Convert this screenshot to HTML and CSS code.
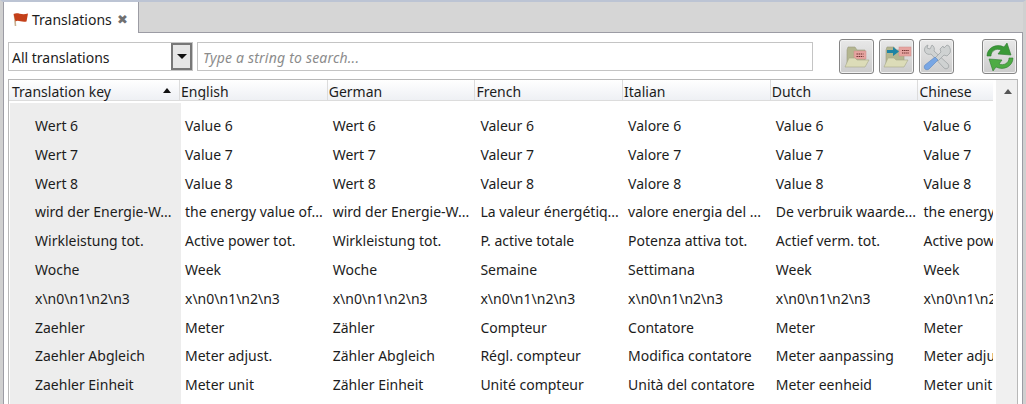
FILE: index.html
```html
<!DOCTYPE html>
<html lang="en">
<head>
<meta charset="utf-8">
<title>Translations</title>
<link rel="stylesheet" href="styles.css">
</head>
<body>
<div class="window">
  <div class="tabstrip">
    <div class="tab">
      <svg class="flag" width="17" height="17" viewBox="0 0 17 17"><path d="M2.5 4 L3.5 15" stroke="#c8b090" stroke-width="1.6" fill="none"/><path d="M1.5 3 C6 1 9 4.5 16 2.5 L14.5 10.5 C9 11.5 6 8.5 3.5 10.5 Z" fill="#c4401a"/></svg>
      <span class="tab-label">Translations</span>
      <span class="tab-close">✖</span>
    </div>
  </div>
  <div class="panel">
    <div class="toolbar">
      <div class="combo">
        <span class="combo-text">All translations</span>
        <span class="combo-btn"><i class="arrow-down"></i></span>
      </div>
      <div class="search">Type a string to search...</div>
      <div class="tools">
        <button class="tool"><svg width="28" height="28" viewBox="0 0 28 28"><path d="M4 7l1-3h7l2 3h8v14H4z" fill="#b4b690" stroke="#9a9c80" stroke-width=".6"/><rect x="11" y="8" width="12" height="8" fill="#e6a4a0" stroke="#d08c88" stroke-width=".5"/><path d="M13.5 11h7M13.5 13.5h7" stroke="#6a2c2c" stroke-width="1" stroke-dasharray="1.4 .7"/><path d="M2 24l4-9h6l2 2h12l-4 7z" fill="#dcdcb8" stroke="#a8aa8c" stroke-width=".6"/></svg></button>
        <button class="tool"><svg width="30" height="28" viewBox="0 0 30 28"><path d="M4 7l1-3h7l2 3h8v14H4z" fill="#b4b690" stroke="#9a9c80" stroke-width=".6"/><rect x="17" y="4" width="12" height="9" fill="#e6a4a0" stroke="#d08c88" stroke-width=".5"/><path d="M20 7.5h7M20 10h7" stroke="#6a2c2c" stroke-width="1" stroke-dasharray="1.4 .7"/><path d="M5 7h6V4l6 4.5L11 13v-3H5z" fill="#1f84a4"/><path d="M2 24l4-9h6l2 2h12l-4 7z" fill="#dcdcb8" stroke="#a8aa8c" stroke-width=".6"/></svg></button>
        <button class="tool"><svg width="30" height="30" viewBox="0 0 30 30"><path d="M6 3a5 5 0 0 0-3 7c1 2 4 3 6 2l13 14c1 1 3 1 4 0s1-3 0-4L12 9c1-2 0-5-2-6L8 7 5 6z" fill="#cfd2d2" stroke="#a0a4a6" stroke-width=".8"/><path d="M27 4l-2-1-3 3-1-2-3 3 1 3-6 6 3 3 6-6 3 1 3-3c1-3 0-5-1-7z" fill="#cfd2d2" stroke="#a0a4a6" stroke-width=".8"/><path d="M13 15l3 3-9 9c-1 1-3 1-4 0s-1-3 0-4z" fill="#78a6e4" stroke="#5a86c0" stroke-width=".6"/></svg></button>
        <button class="tool tool-refresh"><svg width="32" height="32" viewBox="0 0 32 32"><path d="M3 15C3 7 12 2 20 6l3-4 4 12-13-1 3-4c-5-2-10 1-10 6z" fill="#3b9a38" stroke="#2c7a2e" stroke-width=".6"/><path d="M29 17c0 8-9 13-17 9l-3 4-4-12 13 1-3 4c5 2 10-1 10-6z" fill="#4eac44" stroke="#2c7a2e" stroke-width=".6"/></svg></button>
      </div>
    </div>
    <div class="table">
      <div class="grid">
        <div class="row head">
          <div class="cell key">Translation key<i class="arrow-up"></i></div>
          <div class="cell">English</div><div class="cell">German</div><div class="cell">French</div><div class="cell">Italian</div><div class="cell">Dutch</div><div class="cell">Chinese</div>
        </div>
        <div class="row first"><div class="cell key">Wert 6</div><div class="cell">Value 6</div><div class="cell">Wert 6</div><div class="cell">Valeur 6</div><div class="cell">Valore 6</div><div class="cell">Value 6</div><div class="cell">Value 6</div></div>
        <div class="row"><div class="cell key">Wert 7</div><div class="cell">Value 7</div><div class="cell">Wert 7</div><div class="cell">Valeur 7</div><div class="cell">Valore 7</div><div class="cell">Value 7</div><div class="cell">Value 7</div></div>
        <div class="row"><div class="cell key">Wert 8</div><div class="cell">Value 8</div><div class="cell">Wert 8</div><div class="cell">Valeur 8</div><div class="cell">Valore 8</div><div class="cell">Value 8</div><div class="cell">Value 8</div></div>
        <div class="row"><div class="cell key">wird der Energie-W...</div><div class="cell">the energy value of...</div><div class="cell">wird der Energie-W...</div><div class="cell">La valeur énergétiq...</div><div class="cell">valore energia del ...</div><div class="cell">De verbruik waarde...</div><div class="cell">the energy value of...</div></div>
        <div class="row"><div class="cell key">Wirkleistung tot.</div><div class="cell">Active power tot.</div><div class="cell">Wirkleistung tot.</div><div class="cell">P. active totale</div><div class="cell">Potenza attiva tot.</div><div class="cell">Actief verm. tot.</div><div class="cell">Active power tot.</div></div>
        <div class="row"><div class="cell key">Woche</div><div class="cell">Week</div><div class="cell">Woche</div><div class="cell">Semaine</div><div class="cell">Settimana</div><div class="cell">Week</div><div class="cell">Week</div></div>
        <div class="row"><div class="cell key">x\n0\n1\n2\n3</div><div class="cell">x\n0\n1\n2\n3</div><div class="cell">x\n0\n1\n2\n3</div><div class="cell">x\n0\n1\n2\n3</div><div class="cell">x\n0\n1\n2\n3</div><div class="cell">x\n0\n1\n2\n3</div><div class="cell">x\n0\n1\n2\n3</div></div>
        <div class="row"><div class="cell key">Zaehler</div><div class="cell">Meter</div><div class="cell">Zähler</div><div class="cell">Compteur</div><div class="cell">Contatore</div><div class="cell">Meter</div><div class="cell">Meter</div></div>
        <div class="row"><div class="cell key">Zaehler Abgleich</div><div class="cell">Meter adjust.</div><div class="cell">Zähler Abgleich</div><div class="cell">Régl. compteur</div><div class="cell">Modifica contatore</div><div class="cell">Meter aanpassing</div><div class="cell">Meter adjust.</div></div>
        <div class="row"><div class="cell key">Zaehler Einheit</div><div class="cell">Meter unit</div><div class="cell">Zähler Einheit</div><div class="cell">Unité compteur</div><div class="cell">Unità del contatore</div><div class="cell">Meter eenheid</div><div class="cell">Meter unit</div></div>
        <div class="row"><div class="cell key"></div></div>
      </div>
      <div class="scrollbar"><i class="arrow-up small"></i></div>
    </div>
  </div>
</div>
</body>
</html>
```
FILE: styles.css
```css
* { box-sizing: border-box; }
html, body { margin: 0; height: 404px; overflow: hidden; }
body { font-family: "Noto Sans", sans-serif; font-size: 14px; color: #1c1c1c; background: #fff; }
.window { height: 404px; display: flex; flex-direction: column; background: #d8d8d8; border-top: 2px solid #bcc4d4; border-left: 3px solid #d0d0d0; border-right: 3px solid #d0d0d0; }
.tabstrip { height: 31px; display: flex; flex: none; background: #d6d6d6; border-bottom: 1px solid #9c9ca4; }
.tab { width: 136px; height: 31px; background: #fff; border-left: 1px solid #9c9ca4; border-right: 1px solid #9c9ca4; display: flex; align-items: center; padding-left: 8px; padding-top: 3px; }
.flag { margin-right: 3px; flex: none; }
.tab-label { font-size: 14px; }
.tab-close { font-size: 13px; line-height: 1; color: #707070; margin-left: 5px; }
.panel { flex: 1; min-height: 0; background: #fff; padding: 6px 4px 0 4px; display: flex; flex-direction: column; border-left: 1px solid #9c9ca4; border-right: 1px solid #9c9ca4; }
.toolbar { display: flex; align-items: flex-start; height: 40px; flex: none; }
.combo { width: 185px; height: 29px; margin-top: 3px; border: 1px solid #c4c4c4; display: flex; align-items: center; padding-left: 3px; padding-top: 0; }
.combo-text { flex: 1; font-size: 14px; padding-top: 1px; }
.combo-btn { width: 21px; height: 27px; background: #e6e6e6; border: 2px solid #777; display: flex; align-items: center; justify-content: center; }
.arrow-down { width: 0; height: 0; border: 5px solid transparent; border-top: 5px solid #111; border-bottom: 0; }
.search { width: 616px; height: 29px; margin-left: 4px; margin-top: 3px; border: 1px solid #c4c4c4; font-style: italic; color: #8c8c8c; font-size: 14px; letter-spacing: .2px; display: flex; align-items: center; padding: 1px 0 0 5px; }
.tools { display: flex; margin-left: 26px; gap: 5px; }
.tool { width: 35px; height: 35px; padding: 0; background: linear-gradient(#e8e8e8, #cccccc); border: 1px solid #858585; box-shadow: inset 0 0 0 1px #f2f2f2; border-radius: 3px; display: flex; align-items: center; justify-content: center; }
.tool svg { flex: none; }
.tool-refresh { margin-left: 23px; }
.table { flex: 1; min-height: 0; display: flex; border: 1px solid #b8b8b8; border-bottom: 0; overflow: hidden; }
.grid { width: 984px; flex: none; overflow: hidden; }
.row { display: flex; height: 28.8px; white-space: nowrap; background: #fff; }
.cell { width: 147.7px; flex: none; padding-left: 4px; overflow: hidden; display: flex; align-items: center; }
.key { width: 171px; margin-left: 1px; background: #ededed; padding-left: 25px; }
.head { height: 21px; background: linear-gradient(#fff, #eef0f4); border-bottom: 1px solid #dcdcdc; }
.head .cell { padding-left: 1px; border-left: 1px solid #dcdcdc; padding-top: 3px; }
.head .key { width: 170px; margin-left: 0; background: none; border-left: 0; padding-left: 3px; position: relative; overflow: visible; }
.first { height: 37px; margin-top: 2px; }
.first .cell { padding-top: 8px; }
.arrow-up { position: absolute; right: 8px; top: 8px; width: 0; height: 0; border: 4.5px solid transparent; border-bottom: 5px solid #111; border-top: 0; }
.scrollbar { flex: 1; margin-left: 3px; background: #f0f0f0; position: relative; }
.arrow-up.small { right: 5px; top: 9px; border-bottom-color: #555; }
```
